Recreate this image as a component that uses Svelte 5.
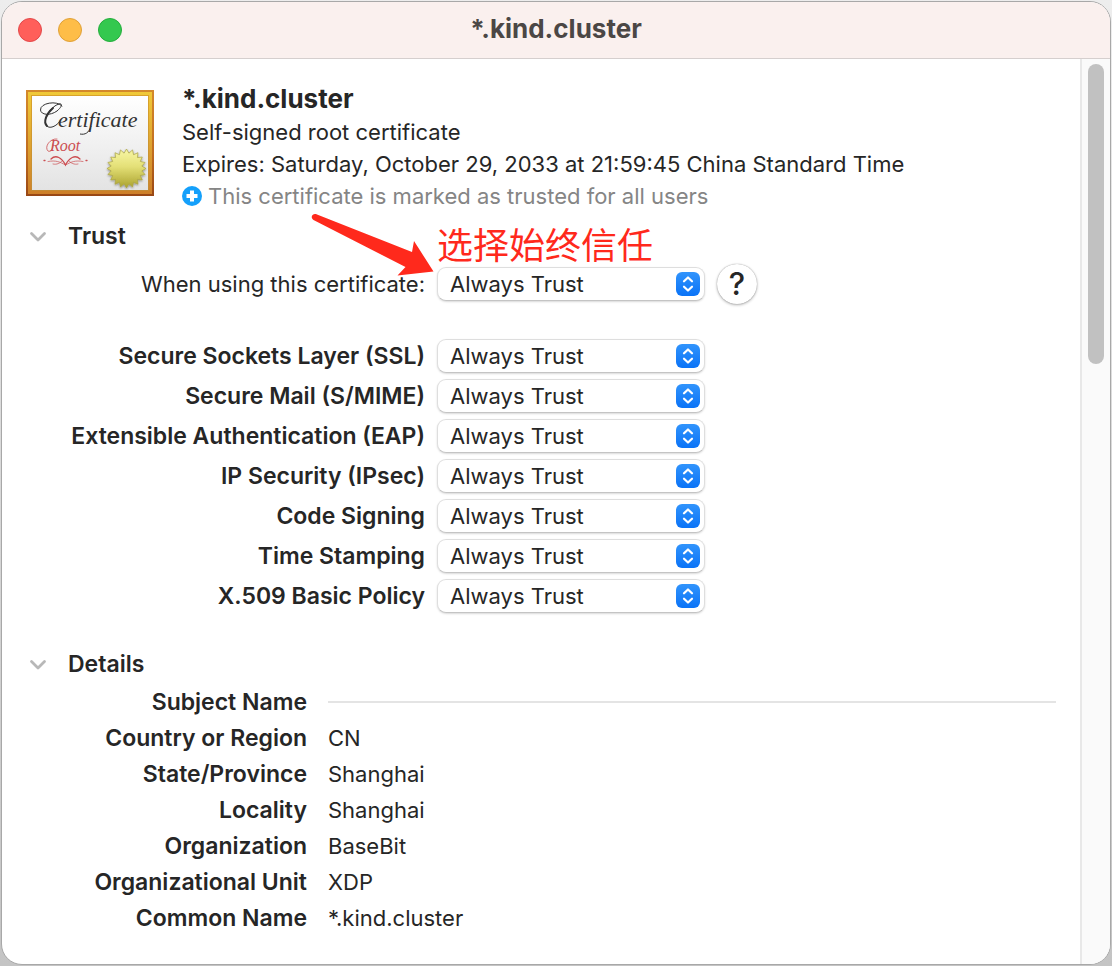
<script>
  const options = ['Always Trust', 'Never Trust', 'Use System Defaults'];
  const policies = [
    { label: 'Secure Sockets Layer (SSL)', id: 'ssl' },
    { label: 'Secure Mail (S/MIME)', id: 'smime' },
    { label: 'Extensible Authentication (EAP)', id: 'eap' },
    { label: 'IP Security (IPsec)', id: 'ipsec' },
    { label: 'Code Signing', id: 'code' },
    { label: 'Time Stamping', id: 'time' },
    { label: 'X.509 Basic Policy', id: 'x509' }
  ];
  const details = [
    ['Country or Region', 'CN'],
    ['State/Province', 'Shanghai'],
    ['Locality', 'Shanghai'],
    ['Organization', 'BaseBit'],
    ['Organizational Unit', 'XDP'],
    ['Common Name', '*.kind.cluster']
  ];
  const points = 20;
  const seal = Array.from({ length: points * 2 }, (_, i) => {
    const r = i % 2 ? 15.5 : 19.5;
    const a = (i * Math.PI) / points - Math.PI / 2;
    return `${(100.5 + r * Math.cos(a)).toFixed(2)},${(78.5 + r * Math.sin(a)).toFixed(2)}`;
  }).join(' ');
</script>

{#snippet popup(id)}
  <span class="popup">
    <select {id}>
      {#each options as option}<option>{option}</option>{/each}
    </select>
    <svg class="steppers" viewBox="0 0 24 24" aria-hidden="true">
      <defs>
        <linearGradient id="blue-{id}" x1="0" y1="0" x2="0" y2="1">
          <stop offset="0" stop-color="#3194fc" /><stop offset="1" stop-color="#0a73f7" />
        </linearGradient>
      </defs>
      <rect width="24" height="24" rx="6" fill="url(#blue-{id})" />
      <path d="M8 9.3 12 5.5 16 9.3M8 14.7 12 18.5 16 14.7" fill="none" stroke="#fff" stroke-width="2.2" stroke-linecap="round" stroke-linejoin="round" />
    </svg>
  </span>
{/snippet}

{#snippet disclosure(title)}
  <button class="disclosure" aria-expanded="true">
    <svg viewBox="0 0 24 24" aria-hidden="true"><path d="M5.5 9.5 12 16 18.5 9.5" fill="none" stroke="#b8b8b8" stroke-width="2.8" stroke-linecap="round" stroke-linejoin="round" /></svg>
    <span>{title}</span>
  </button>
{/snippet}

<main class="window">
  <header class="titlebar">
    <div class="lights">
      <button class="light red" aria-label="Close"></button>
      <button class="light yellow" aria-label="Minimize"></button>
      <button class="light green" aria-label="Zoom"></button>
    </div>
    <div class="title">*.kind.cluster</div>
  </header>

  <div class="body">
    <div class="content">
      <section class="summary">
        <svg class="certificate" viewBox="0 0 128 106" role="img" aria-label="Root certificate">
          <defs>
            <linearGradient id="frame" x1="0" y1="0" x2="0" y2="1">
              <stop offset="0" stop-color="#d4892b" /><stop offset=".6" stop-color="#c06c20" /><stop offset="1" stop-color="#984715" />
            </linearGradient>
            <linearGradient id="gold" x1="0" y1="0" x2="0" y2="1">
              <stop offset="0" stop-color="#f0c938" /><stop offset="1" stop-color="#cd7f29" />
            </linearGradient>
            <linearGradient id="inset" x1="0" y1="0" x2="0" y2="1">
              <stop offset="0" stop-color="#d9a32b" /><stop offset="1" stop-color="#c38a35" />
            </linearGradient>
            <linearGradient id="paper" x1="0" y1="0" x2="0" y2="1">
              <stop offset="0" stop-color="#fff" /><stop offset="1" stop-color="#e3e3e3" />
            </linearGradient>
            <linearGradient id="seal" x1="0" y1="0" x2="0" y2="1">
              <stop offset="0" stop-color="#f8f7a6" /><stop offset=".45" stop-color="#e4e077" /><stop offset="1" stop-color="#aaa22e" />
            </linearGradient>
            <filter id="shade" x="-20%" y="-20%" width="140%" height="140%">
              <feDropShadow dx="0" dy="1" stdDeviation="1" flood-opacity=".4" />
            </filter>
          </defs>
          <rect width="128" height="106" fill="url(#frame)" />
          <rect x="2" y="2" width="124" height="102" fill="url(#gold)" />
          <rect x="5.5" y="5.5" width="117" height="95" fill="url(#paper)" stroke="url(#inset)" />
          <g fill="none" stroke="#333" stroke-linecap="round">
            <path d="M36 16C31 10 14 13 14.5 20C15 25 24 26 31 21C37 16 36 13 33 14C25 16 17 29 20 35C23 40 31 36 34 31" stroke-width="1" />
            <path d="M27 18C20 24 17 32 21 36" stroke-width="2" />
          </g>
          <text class="script" x="32" y="37" font-size="22" fill="#333">ertificate</text>
          <path d="M65 36C63 43 59 45 54 44" fill="none" stroke="#333" />
          <g fill="none" stroke="#cc4d51" stroke-linecap="round">
            <path d="M31 49C24 48 18 57 22 61C25 63 28 57 27 54" stroke-width=".8" />
            <path d="M18 70.5H19M60 70.5H61M25 69C30 64 36 68 39.5 75C43 68 49 64 54 69" stroke-width="1.3" />
            <path d="M22 71.5C30 70 34 72 39.5 75C45 72 49 70 57 71.5M27 74C31 75 34 73 36 71M52 74C48 75 45 73 43 71" stroke-width=".7" />
          </g>
          <text class="script" x="24" y="61" font-size="16" fill="#cc4d51">Root</text>
          <polygon points={seal} fill="url(#seal)" stroke="#aaa442" stroke-width=".7" filter="url(#shade)" />
        </svg>
        <div class="facts">
          <h1>*.kind.cluster</h1>
          <p>Self-signed root certificate</p>
          <p>Expires: Saturday, October 29, 2033 at 21:59:45 China Standard Time</p>
          <p class="trusted">
            <svg viewBox="0 0 20 20" aria-hidden="true"><circle cx="10" cy="10" r="10" fill="#14a0fb" /><path d="M10 4.5V15.5M4.5 10H15.5" stroke="#fff" stroke-width="4" /></svg>
            <span>This certificate is marked as trusted for all users</span>
          </p>
        </div>
      </section>

      <section class="trust">
        {@render disclosure('Trust')}
        <div class="row overall">
          <label for="all">When using this certificate:</label>
          {@render popup('all')}
          <button class="help" aria-label="Help">?</button>
          <div class="note">
            <svg viewBox="0 0 126 66" aria-hidden="true"><path d="M7 2.5 102 40 104 29 123.5 59.5 87.500 63.500 95.5 55 3.5 8C-.5 5 3 .5 7 2.5Z" fill="#ff291c" /></svg>
            <span lang="zh-CN">选择始终信任</span>
          </div>
        </div>
        {#each policies as policy}
          <div class="row">
            <label class="strong" for={policy.id}>{policy.label}</label>
            {@render popup(policy.id)}
          </div>
        {/each}
      </section>

      <section class="details">
        {@render disclosure('Details')}
        <div class="pair"><h2>Subject Name</h2><hr /></div>
        <dl>
          {#each details as [name, value]}
            <div class="pair"><dt>{name}</dt><dd>{value}</dd></div>
          {/each}
        </dl>
      </section>
    </div>
    <div class="gutter"><div class="thumb"></div></div>
  </div>
</main>

<style>
  :global(body) {
    min-height: 100vh;
    padding: 1px;
    background: linear-gradient(#ededed, #c4c4c4);
  }
  :global(*) {
    box-sizing: border-box;
  }
  .window {
    display: flex;
    flex-direction: column;
    min-height: calc(100vh - 2px);
    border: 1px solid #a8a8a8;
    border-radius: 21px;
    overflow: hidden;
    background: #fff;
    color: #262626;
    font: 22px/32px Inter, 'Noto Sans CJK SC', sans-serif;
  }
  h1, h2, p, dl, dd, hr { margin: 0; }
  button, select { font: inherit; color: inherit; }
  .titlebar {
    display: grid;
    grid-template-columns: 1fr auto 1fr;
    align-items: center;
    height: 57px;
    padding: 0 16px;
    border-bottom: 1px solid #d5cfce;
    background: #faf0ee;
  }
  .lights { display: flex; gap: 16px; }
  .light {
    width: 24px;
    height: 24px;
    padding: 0;
    border: 1px solid;
    border-radius: 50%;
  }
  .red { background: #ff5f5a; border-color: #e2484a; }
  .yellow { background: #febd48; border-color: #dfa038; }
  .green { background: #34c84f; border-color: #24ad3c; }
  .title { padding-bottom: 2px; font-size: 26px; font-weight: 700; color: #4b4745; }
  .body { display: flex; flex: 1; }
  .content { flex: 1; min-width: 0; padding: 24px; }
  .gutter {
    width: 30px;
    padding: 5px 6px;
    border-left: 2px solid #e8e8e8;
    background: #fafafa;
  }
  .thumb { width: 16px; height: 300px; border-radius: 8px; background: #c1c1c1; }
  .summary { display: flex; gap: 28px; }
  .certificate { flex: none; width: 128px; height: 106px; margin-top: 7px; }
  .script { font-family: 'Liberation Serif', serif; font-style: italic; }
  h1 { margin-bottom: 1px; font-size: 26px; font-weight: 700; line-height: 32px; }
  .trusted { display: flex; align-items: center; gap: 6px; color: #858585; }
  .trusted svg { width: 20px; height: 20px; }
  .disclosure {
    display: flex;
    align-items: center;
    gap: 18px;
    padding: 0;
    border: 0;
    background: none;
    font-size: 23px;
    font-weight: 600;
  }
  .disclosure svg { width: 24px; height: 24px; }
  .trust { margin-top: 8px; }
  .row {
    display: grid;
    grid-template-columns: 399px 268px auto;
    justify-content: start;
    align-items: center;
    column-gap: 12px;
    height: 40px;
  }
  .row label { text-align: right; white-space: nowrap; }
  .row .strong { font-size: 23px; font-weight: 600; }
  .overall { position: relative; margin: 12px 0 32px; }
  .popup { display: grid; align-items: center; }
  .popup > * { grid-area: 1 / 1; }
  select {
    appearance: none;
    width: 100%;
    height: 34px;
    padding: 0 36px 0 12px;
    border: 1px solid #dedede;
    border-bottom-color: #c4c4c4;
    border-radius: 9px;
    background: #fff;
    box-shadow: 0 1px 2px #00000026;
  }
  .steppers { justify-self: end; width: 24px; height: 24px; margin-right: 5px; pointer-events: none; }
  .help {
    width: 40px;
    height: 40px;
    padding: 0;
    border: 0;
    border-radius: 50%;
    background: #fff;
    box-shadow: 0 0 1px #00000066, 0 1px 3px #0000004d;
    font-size: 31px;
    font-weight: 500;
    line-height: 40px;
  }
  .note {
    position: absolute;
    left: 284px;
    top: -52px;
    display: flex;
    pointer-events: none;
    color: #ff291c;
    font: 36px/52px 'Noto Sans CJK SC', sans-serif;
  }
  .note svg { width: 126px; height: 66px; }
  .note span { white-space: nowrap; margin: 5px 0 0 1px; }
  .details { margin-top: 32px; }
  .details .disclosure { margin-bottom: 4px; }
  .pair {
    display: grid;
    grid-template-columns: 281px 1fr;
    column-gap: 21px;
    align-items: center;
    min-height: 36px;
  }
  h2, dt { font-size: 23px; font-weight: 600; text-align: right; }
  hr { border: 0; border-top: 2px solid #e4e4e4; }
</style>
